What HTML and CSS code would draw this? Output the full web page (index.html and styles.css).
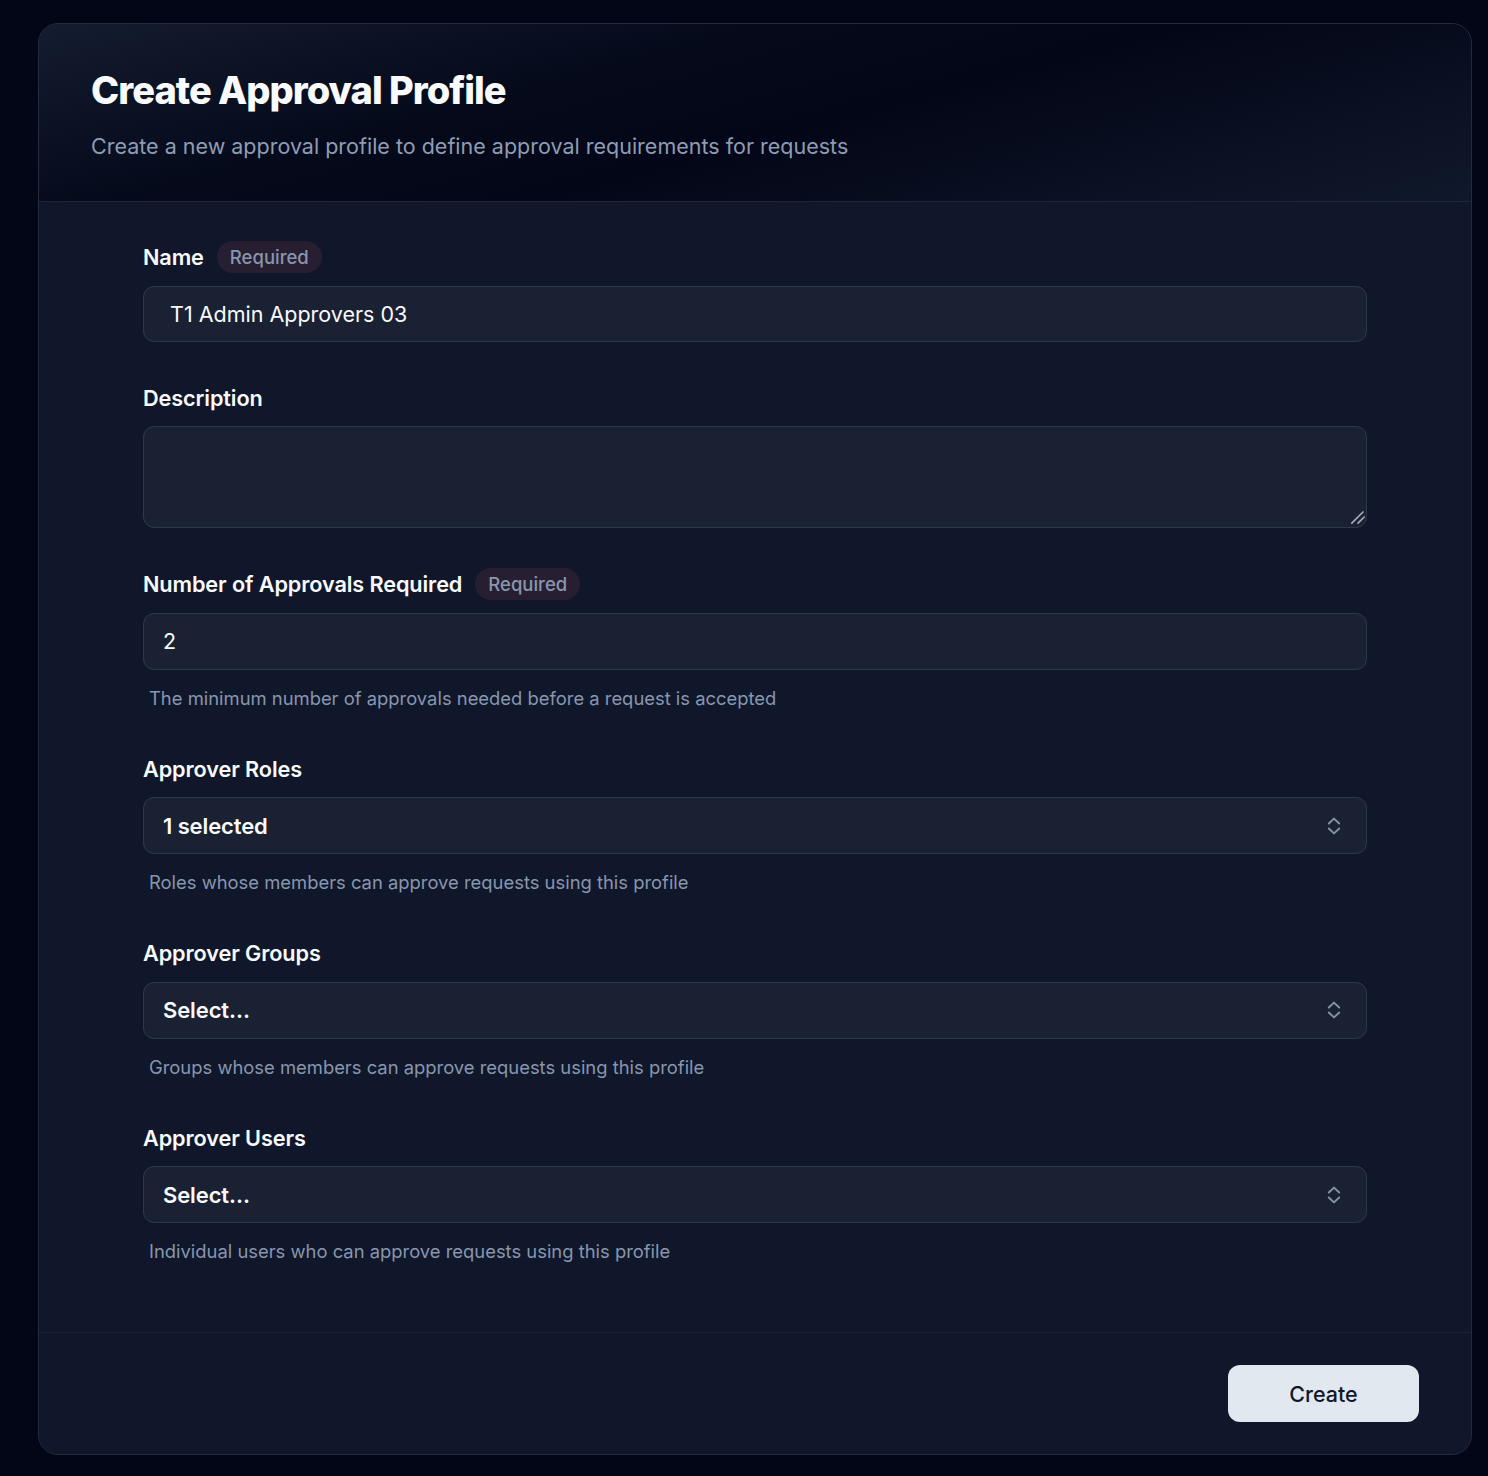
FILE: index.html
```html
<!DOCTYPE html>
<html lang="en">
<head>
<meta charset="utf-8">
<title>Create Approval Profile</title>
<link rel="stylesheet" href="styles.css">
</head>
<body>
<div class="page">
  <div class="card">
    <header class="card-header">
      <h1 class="title">Create Approval Profile</h1>
      <p class="subtitle">Create a new approval profile to define approval requirements for requests</p>
    </header>
    <form class="card-body">
      <div class="form">
        <div class="field">
          <div class="label-row"><label class="label">Name</label><span class="badge">Required</span></div>
          <input class="input input-name" type="text" value="T1 Admin Approvers 03">
        </div>
        <div class="field">
          <div class="label-row"><label class="label">Description</label></div>
          <div class="textarea-wrap">
            <textarea class="textarea"></textarea>
            <svg class="grip" width="16" height="16" viewBox="0 0 16 16"><path d="M1.8 13.2 L13 2 M8 13.2 L14.2 7" fill="none" stroke="#a3a9b6" stroke-width="1.7" stroke-linecap="round"/></svg>
          </div>
        </div>
        <div class="field">
          <div class="label-row"><label class="label">Number of Approvals Required</label><span class="badge">Required</span></div>
          <input class="input" type="text" value="2">
          <p class="helper">The minimum number of approvals needed before a request is accepted</p>
        </div>
        <div class="field">
          <div class="label-row"><label class="label">Approver Roles</label></div>
          <div class="select"><span>1 selected</span>
            <svg class="chev" width="14" height="18" viewBox="0 0 14 18"><path d="M1.8 6.5 L7 1.6 L12.2 6.5 M1.8 11.5 L7 16.4 L12.2 11.5" fill="none" stroke="currentColor" stroke-width="1.9" stroke-linecap="round" stroke-linejoin="round"/></svg>
          </div>
          <p class="helper">Roles whose members can approve requests using this profile</p>
        </div>
        <div class="field">
          <div class="label-row"><label class="label">Approver Groups</label></div>
          <div class="select"><span>Select…</span>
            <svg class="chev" width="14" height="18" viewBox="0 0 14 18"><path d="M1.8 6.5 L7 1.6 L12.2 6.5 M1.8 11.5 L7 16.4 L12.2 11.5" fill="none" stroke="currentColor" stroke-width="1.9" stroke-linecap="round" stroke-linejoin="round"/></svg>
          </div>
          <p class="helper">Groups whose members can approve requests using this profile</p>
        </div>
        <div class="field">
          <div class="label-row"><label class="label">Approver Users</label></div>
          <div class="select"><span>Select…</span>
            <svg class="chev" width="14" height="18" viewBox="0 0 14 18"><path d="M1.8 6.5 L7 1.6 L12.2 6.5 M1.8 11.5 L7 16.4 L12.2 11.5" fill="none" stroke="currentColor" stroke-width="1.9" stroke-linecap="round" stroke-linejoin="round"/></svg>
          </div>
          <p class="helper">Individual users who can approve requests using this profile</p>
        </div>
      </div>
    </form>
    <footer class="card-footer">
      <button class="btn" type="button">Create</button>
    </footer>
  </div>
</div>
</body>
</html>
```

FILE: styles.css
```css
* { box-sizing: border-box; }
html, body { margin: 0; padding: 0; }
body {
  background: #030617;
  font-family: Inter, "Noto Sans", sans-serif;
  color: #f8fafc;
  width: 1488px;
  min-height: 1476px;
}
.page {
  padding: 23px 16px 20px 38px;
}
.card {
  border: 1px solid #232b3c;
  border-radius: 20px;
  background: #10172a;
  overflow: hidden;
}
.card-header {
  padding: 44px 52px 41px;
  border-bottom: 1px solid #1e2638;
  background: linear-gradient(165deg, #141c2f 0%, #050a1b 35%, #030617 55%, #0a1122 80%, #10182b 100%);
}
.title {
  margin: 0;
  font-size: 38px;
  line-height: 44px;
  font-weight: 800;
  letter-spacing: -0.026em;
  color: #f8fafc;
}
.subtitle {
  margin: 20px 0 0;
  font-size: 21.5px;
  line-height: 28px;
  color: #8e9cb4;
}
.card-body {
  padding: 41px 104px 66px;
  border-bottom: 1px solid #1c2335;
}
.form {
  display: flex;
  flex-direction: column;
  gap: 42px;
}
.field {
  display: flex;
  flex-direction: column;
}
.label-row {
  display: flex;
  align-items: center;
  height: 28px;
  margin-bottom: 14.5px;
}
.label {
  font-size: 21.7px;
  line-height: 28px;
  font-weight: 600;
  color: #f8fafc;
  letter-spacing: -0.005em;
}
.badge {
  margin-left: 13px;
  height: 32px;
  padding: 0 13px;
  border-radius: 16px;
  background: #271f31;
  color: #8796ae;
  font-size: 18.5px;
  font-weight: 500;
  line-height: 32px;
}
.input {
  height: 57px;
  width: 100%;
  border: 1px solid #2f3849;
  border-radius: 11px;
  background: #1a2133;
  color: #f8fafc;
  font-family: Inter, "Noto Sans", sans-serif;
  font-size: 21.5px;
  padding: 0 19px;
  outline: none;
}
.input-name { padding-left: 26px; height: 56px; }
.textarea-wrap {
  position: relative;
  height: 102px;
}
.textarea {
  height: 102px;
  width: 100%;
  border: 1px solid #2f3849;
  border-radius: 11px;
  background: #1a2133;
  color: #f8fafc;
  font-family: Inter, "Noto Sans", sans-serif;
  font-size: 21px;
  padding: 14px 19px;
  resize: none;
  outline: none;
  display: block;
}
.grip {
  position: absolute;
  right: 1px;
  bottom: 2px;
}
.select {
  height: 57px;
  border: 1px solid #2f3849;
  border-radius: 11px;
  background: #1a2133;
  display: flex;
  align-items: center;
  justify-content: space-between;
  padding: 0 25px 0 19px;
  font-size: 22px;
  font-weight: 600;
  color: #f8fafc;
  letter-spacing: -0.005em;
}
.chev { color: #8a93a6; display: block; }
.helper {
  margin: 16px 0 3px;
  padding-left: 6px;
  font-size: 18.4px;
  line-height: 24px;
  color: #8796ae;
}
.card-footer {
  display: flex;
  justify-content: flex-end;
  padding: 32px 52px 32px;
  background: #10172a;
}
.btn {
  width: 191px;
  height: 57px;
  border: none;
  border-radius: 12px;
  background: #e2e8f0;
  color: #0f172a;
  font-family: Inter, "Noto Sans", sans-serif;
  font-size: 21.5px;
  font-weight: 500;
}
```
